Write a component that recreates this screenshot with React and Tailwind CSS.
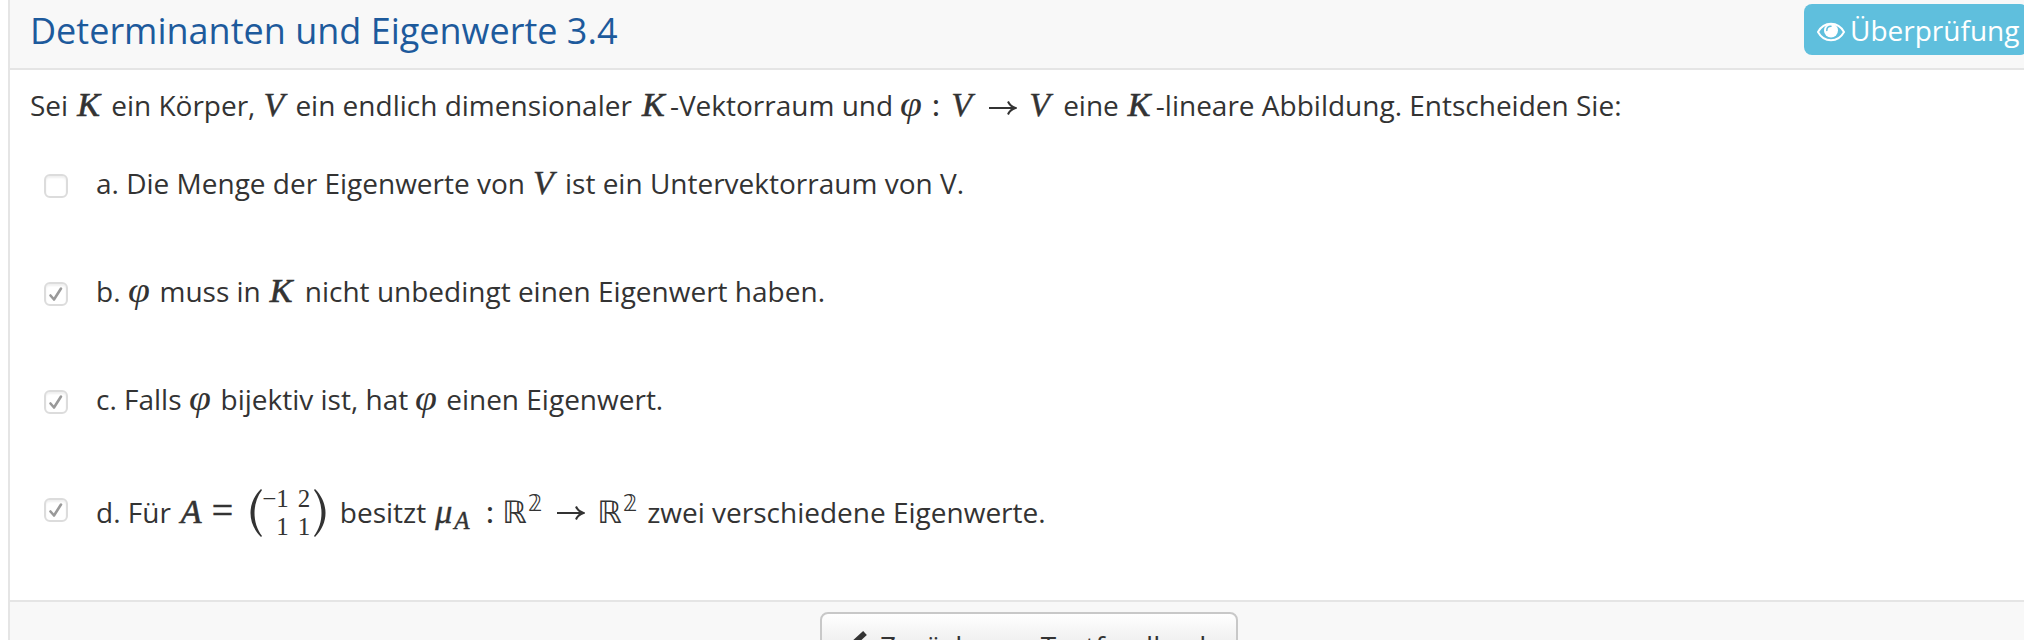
const glyph = "shrink-0 whitespace-pre font-['Liberation_Serif'] italic text-[34px] leading-none";

function K({ className }) {
  return <span className={`${glyph} [-webkit-text-stroke:0.7px_#333] ${className}`}>K</span>;
}
function V({ className }) {
  return <span className={`${glyph} [-webkit-text-stroke:0.4px_#333] ${className}`}>V</span>;
}
function Phi({ className }) {
  return (
    <span className={`shrink-0 font-['Liberation_Serif'] text-[36px] italic leading-none ${className}`}>
      <span className="inline-block origin-left scale-x-110">φ</span>
    </span>
  );
}
function Arrow({ className }) {
  return (
    <svg viewBox="0 0 28 16" className={`h-4 w-7 shrink-0 ${className}`} fill="none" stroke="#333" strokeWidth="2">
      <path d="M0 8h26M19 1.500c1.500 3.500 4 5.500 7.500 6.500c-3.500 1-6 3-7.500 6.500" />
    </svg>
  );
}
function Blackboard({ className }) {
  return (
    <span className={`shrink-0 font-['DejaVu_Sans'] text-[31px] leading-none ${className}`}>
      ℝ<sup className="relative -top-[12px] ml-[1px] align-baseline text-[23px] leading-none">𝟚</sup>
    </span>
  );
}

function Check({ checked }) {
  return (
    <span className="flex size-6 shrink-0 items-center justify-center rounded-md border-2 border-[#dcdcdc] bg-white shadow-[inset_0_2px_2px_#f0f0f0]">
      {checked && (
        <svg viewBox="0 0 20 20" className="size-5 shrink-0" fill="none" stroke="#999" strokeWidth="2.600" strokeLinecap="round" strokeLinejoin="round">
          <path d="M4.500 11.500L8 15.500L15 4.500" />
        </svg>
      )}
    </span>
  );
}

function Answer({ checked, offset = "-mt-px", children }) {
  return (
    <div className="flex h-[108px] items-start pl-[34px]">
      <div className="pt-[10px]"><Check checked={checked} /></div>
      <div className={`ml-[28px] flex h-11 items-baseline whitespace-pre leading-[40px] ${offset}`}>{children}</div>
    </div>
  );
}

export default function App() {
  return (
    <div className="h-[640px] w-[2024px] overflow-hidden bg-white pl-2 font-['Open_Sans',sans-serif] text-[28px] text-[#333]">
      <div className="flex h-full flex-col border-l-2 border-[#e5e5e5]">
        <header className="flex h-[70px] shrink-0 items-start justify-between border-b-2 border-[#e5e5e5] bg-[#f8f8f8] pl-5">
          <h1 className="pt-[6px] text-[36px] leading-[49px] text-[#1d5a9c]">Determinanten und Eigenwerte 3.4</h1>
          <button className="-mr-1 mt-1 flex h-[51px] w-[224px] shrink-0 items-center whitespace-nowrap rounded-lg bg-[#5fbfdd] pl-[13px] text-white">
            <svg viewBox="0 0 28 20" className="mt-1 h-5 w-7 shrink-0" fill="none">
              <path d="M1 10C7-1 21-1 27 10C21 21 7 21 1 10Z" stroke="#fff" strokeWidth="2" />
              <circle cx="14" cy="8.500" r="7" fill="#fff" />
              <path d="M9.800 8.500Q9.800 4.300 14 4.300" stroke="#5fbfdd" strokeWidth="1.500" strokeLinecap="round" />
            </svg>
            <span className="ml-[5px]">Überprüfung</span>
          </button>
        </header>

        <main className="h-[530px] shrink-0">
          <p className="flex h-[94px] items-baseline whitespace-pre pl-5 pt-[15px] leading-[40px]">
            <span>Sei</span><K className="ml-[9px] w-[34px]" /><span>ein Körper,</span>
            <V className="ml-[8px] w-[32px]" /><span>ein endlich dimensionaler</span>
            <K className="ml-[10px] w-[28px]" /><span>-Vektorraum und</span>
            <Phi className="ml-[7px] w-[31px]" /><span className={`${glyph} w-[20px] not-italic`}>:</span>
            <V className="w-[38px]" /><Arrow className="mt-[15px] self-start" /><V className="ml-[12px] w-[34px]" />
            <span>eine</span><K className="ml-[9px] w-[28px]" /><span>-lineare Abbildung. Entscheiden Sie:</span>
          </p>
          <Answer>
            <span>a. Die Menge der Eigenwerte von</span><V className="ml-[8px] w-[32px]" /><span>ist ein Untervektorraum von V.</span>
          </Answer>
          <Answer checked>
            <span>b.</span><Phi className="ml-[7px] w-[32px]" /><span>muss in</span><K className="ml-[9px] w-[35px]" />
            <span>nicht unbedingt einen Eigenwert haben.</span>
          </Answer>
          <Answer checked>
            <span>c. Falls</span><Phi className="ml-[7px] w-[32px]" /><span>bijektiv ist, hat</span><Phi className="ml-[7px] w-[31px]" />
            <span>einen Eigenwert.</span>
          </Answer>
          <Answer checked offset="mt-[3px]">
            <span>d. Für</span>
            <span className={`${glyph} ml-[10px] w-[31px] [-webkit-text-stroke:0.6px_#333]`}>A</span>
            <span className="w-[38px] shrink-0 font-['Liberation_Serif'] text-[38px] leading-none [-webkit-text-stroke:0.5px_#333]">=</span>
            <svg viewBox="0 0 12 48" className="h-12 w-3 shrink-0 self-center" fill="#333"><path d="M11 0C-3 14-3 34 11 48L12 47C2 34 2 14 12 1Z" /></svg>
            <span className="mr-[4px] grid w-[48px] shrink-0 grid-cols-[27px_12px] justify-end gap-x-[9px] self-center text-right font-['Liberation_Serif'] text-[25px] leading-[28px]">
              <span>−1</span><span>2</span><span>1</span><span>1</span>
            </span>
            <svg viewBox="0 0 12 48" className="h-12 w-3 shrink-0 self-center" fill="#333"><path d="M1 0C15 14 15 34 1 48L0 47C10 34 10 14 0 1Z" /></svg>
            <span className="ml-[14px]">besitzt</span>
            <span className={`${glyph} ml-[9px] w-[50px] [-webkit-text-stroke:0.4px_#333]`}>μ<sub className="relative top-[6px] ml-[2px] align-baseline text-[25px] leading-none">A</sub></span>
            <span className={`${glyph} w-[17px] not-italic`}>:</span>
            <Blackboard className="w-[55px]" /><Arrow className="self-center" /><Blackboard className="ml-[12px] w-[50px]" />
            <span>zwei verschiedene Eigenwerte.</span>
          </Answer>
        </main>

        <footer className="flex flex-1 items-start border-t-2 border-[#e5e5e5] bg-[#f8f8f8] pl-[810px] pt-[10px]">
          <button className="flex h-[60px] w-[418px] shrink-0 items-center whitespace-nowrap rounded-lg border-2 border-[#c8c8c8] bg-linear-to-b from-white to-[#e0e0e0] pl-[26px]">
            <svg viewBox="0 0 20 28" className="mt-1 h-7 w-5 shrink-0" fill="none" stroke="#333" strokeWidth="5.500"><path d="M17 3L5 14L17 25" /></svg>
            <span className="ml-3 pt-2">Zurück zum Testfeedback</span>
          </button>
        </footer>
      </div>
    </div>
  );
}
